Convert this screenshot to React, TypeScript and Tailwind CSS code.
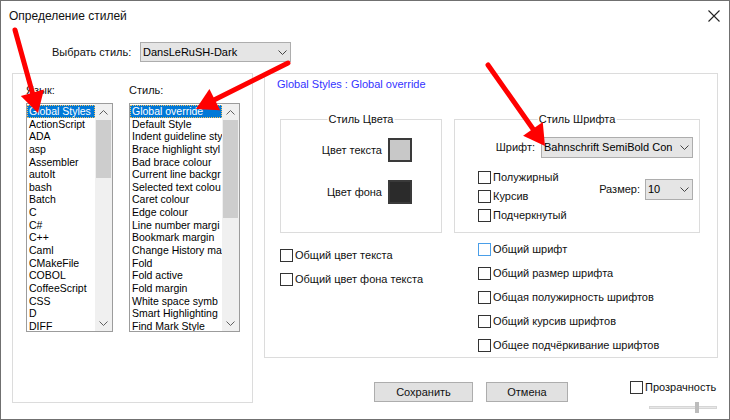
import React from 'react';

const languages = [
  'Global Styles', 'ActionScript', 'ADA', 'asp', 'Assembler', 'autoIt', 'bash', 'Batch', 'C',
  'C#', 'C++', 'Caml', 'CMakeFile', 'COBOL', 'CoffeeScript', 'CSS', 'D', 'DIFF',
];

// the list is narrow, so the long names show cut off, as in the dialog
const styles = [
  'Global override', 'Default Style', 'Indent guideline sty', 'Brace highlight styl',
  'Bad brace colour', 'Current line backgr', 'Selected text colou', 'Caret colour',
  'Edge colour', 'Line number margi', 'Bookmark margin', 'Change History ma', 'Fold',
  'Fold active', 'Fold margin', 'White space symb', 'Smart Highlighting', 'Find Mark Style',
];

function Chevron({ up = false, className = '' }: { up?: boolean; className?: string }) {
  return (
    <svg width="9" height="5" viewBox="0 0 9 5" className={className}>
      <path d={up ? 'M0.5 4.5 L4.5 0.5 L8.5 4.5' : 'M0.5 0.5 L4.5 4.5 L8.5 0.5'} fill="none" stroke="currentColor" strokeWidth="1" />
    </svg>
  );
}

function ListBox({ items, className, thumbClass }: { items: string[]; className: string; thumbClass: string }) {
  return (
    <div className={`flex h-[229px] border border-[#9c9c9c] bg-white ${className}`}>
      <div className="flex-1 overflow-hidden pt-[1px]">
        {items.map((item, i) => (
          <div
            key={item}
            className={`h-[12.65px] whitespace-nowrap pl-[2px] text-[10.5px] leading-[12.65px] ${
              i === 0 ? 'bg-[#0078d7] text-white outline-1 outline-dotted outline-offset-[-1px] outline-[#f0c060]' : 'text-black'
            }`}
          >
            {item}
          </div>
        ))}
      </div>
      {/* scrollbar */}
      <div className="flex w-[17px] flex-col bg-[#f0f0f0] text-[#606060]">
        <div className="flex h-[16px] items-center justify-center">
          <Chevron up />
        </div>
        <div className="flex-1 px-[1px]">
          <div className={`bg-[#cdcdcd] ${thumbClass}`} />
        </div>
        <div className="flex h-[16px] items-center justify-center">
          <Chevron />
        </div>
      </div>
    </div>
  );
}

function Combo({ value, className }: { value: string; className: string }) {
  return (
    <div className={`flex items-center border border-[#adadad] bg-[#e5e5e5] text-[11px] text-black ${className}`}>
      <span className="flex-1 overflow-hidden whitespace-nowrap pl-[2px]">{value}</span>
      <span className="flex w-[16px] shrink-0 justify-center text-[#444]">
        <Chevron />
      </span>
    </div>
  );
}

function Check({ label, focused = false }: { label: string; focused?: boolean }) {
  return (
    <div className="flex h-[13px] items-center gap-[2px] text-[11px] text-[#111]">
      <span className={`h-[13px] w-[13px] shrink-0 border bg-white ${focused ? 'border-[#4a9ee8]' : 'border-[#333]'}`} />
      <span className="whitespace-nowrap">{label}</span>
    </div>
  );
}

function Group({ title, className, children }: { title: string; className: string; children: React.ReactNode }) {
  return (
    <div className={`relative border border-[#dcdcdc] ${className}`}>
      <span className="absolute left-1/2 top-[-8px] -translate-x-1/2 bg-white px-[1px] text-[11px] leading-[14px] whitespace-nowrap text-[#111]">
        {title}
      </span>
      {children}
    </div>
  );
}

function Arrow({ sx, sy, tx, ty }: { sx: number; sy: number; tx: number; ty: number }) {
  const dx = tx - sx;
  const dy = ty - sy;
  const len = Math.hypot(dx, dy);
  const ux = dx / len;
  const uy = dy / len;
  const L = 21;
  const W = 12;
  const bx = tx - L * ux;
  const by = ty - L * uy;
  const px = -uy;
  const py = ux;
  const pts = `${tx},${ty} ${bx + W * px},${by + W * py} ${bx - W * px},${by - W * py}`;
  return (
    <g>
      <line x1={sx} y1={sy} x2={bx + ux * 2} y2={by + uy * 2} stroke="#ff0000" strokeWidth="5" strokeLinecap="round" />
      <polygon points={pts} fill="#ff0000" />
    </g>
  );
}

export default function App() {
  return (
    <div className="relative flex h-[420px] w-[730px] flex-col overflow-hidden border border-[#707070] bg-white font-['Liberation_Sans',Arial,sans-serif] text-black">
      {/* Title bar */}
      <div className="flex h-[29px] items-center justify-between pl-[8px] pr-[9px]">
        <span className="text-[12px] text-[#111]">Определение стилей</span>
        <svg width="12" height="12" viewBox="0 0 12 12">
          <path d="M0.5 0.5 L11.5 11.5 M11.5 0.5 L0.5 11.5" stroke="#222" strokeWidth="1.1" />
        </svg>
      </div>

      {/* Style selector */}
      <div className="mt-[12px] flex items-center pl-[51px]">
        <span className="w-[88px] text-[11px] text-[#111]">Выбрать стиль:</span>
        <Combo value="DansLeRuSH-Dark" className="h-[20px] w-[151px]" />
      </div>

      <div className="mt-[11px] flex pl-[11px]">
        {/* Language / style lists */}
        <div className="h-[330px] w-[241px] border border-[#dcdcdc] pl-[13px] pt-[10px]">
          <div className="flex gap-[16px]">
            <div className="flex flex-col">
              <span className="mb-[6px] h-[13px] text-[11px] leading-[13px] text-[#111]">Язык:</span>
              <ListBox items={languages} className="w-[87px]" thumbClass="h-[58px]" />
            </div>
            <div className="flex flex-col">
              <span className="mb-[6px] h-[13px] text-[11px] leading-[13px] text-[#111]">Стиль:</span>
              <ListBox items={styles} className="w-[111px]" thumbClass="h-[98px]" />
            </div>
          </div>
        </div>

        {/* Right side */}
        <div className="ml-[11px] flex w-[454px] flex-col">
          <div className="h-[285px] border border-[#dcdcdc] pl-[12px] pt-[4px]">
            <div className="h-[13px] text-[11px] leading-[13px] text-[#3333ff]">Global Styles : Global override</div>

            <div className="mt-[28px] flex gap-[12px] pl-[3px]">
              <Group title="Стиль Цвета" className="h-[114px] w-[162px]">
                <div className="flex flex-col items-end gap-[18px] pr-[29px] pt-[18px]">
                  <div className="flex items-center gap-[6px] text-[11px] text-[#111]">
                    <span>Цвет текста</span>
                    <span className="h-[24px] w-[24px] border-2 border-[#3a3a3a] bg-[#c8c8c8]" />
                  </div>
                  <div className="flex items-center gap-[6px] text-[11px] text-[#111]">
                    <span>Цвет фона</span>
                    <span className="h-[24px] w-[24px] border-2 border-[#3a3a3a] bg-[#2b2b2b]" />
                  </div>
                </div>
              </Group>

              <Group title="Стиль Шрифта" className="h-[114px] w-[246px]">
                <div className="flex items-center justify-end gap-[6px] pr-[6px] pt-[17px] text-[11px] text-[#111]">
                  <span>Шрифт:</span>
                  <Combo value="Bahnschrift SemiBold Con" className="h-[21px] w-[152px]" />
                </div>
                <div className="mt-[13px] flex justify-between pl-[23px] pr-[6px]">
                  <div className="flex flex-col gap-[6px]">
                    <Check label="Полужирный" />
                    <Check label="Курсив" />
                    <Check label="Подчеркнутый" />
                  </div>
                  <div className="mt-[8px] flex h-[21px] items-center gap-[5px] text-[11px] text-[#111]">
                    <span>Размер:</span>
                    <Combo value="10" className="h-[21px] w-[48px]" />
                  </div>
                </div>
              </Group>
            </div>

            <div className="flex pl-[3px]">
              <div className="mt-[16px] flex w-[198px] flex-col gap-[11px]">
                <Check label="Общий цвет текста" />
                <Check label="Общий цвет фона текста" />
              </div>
              <div className="mt-[10px] flex flex-col gap-[11px]">
                <Check label="Общий шрифт" focused />
                <Check label="Общий размер шрифта" />
                <Check label="Общая полужирность шрифтов" />
                <Check label="Общий курсив шрифтов" />
                <Check label="Общее подчёркивание шрифтов" />
              </div>
            </div>
          </div>

          {/* Buttons */}
          <div className="mt-[23px] flex items-start pl-[110px]">
            <button className="mt-[1px] h-[20px] w-[99px] border border-[#adadad] bg-[#e1e1e1] text-[11px] text-[#111]">
              Сохранить
            </button>
            <button className="ml-[13px] mt-[1px] h-[20px] w-[82px] border border-[#adadad] bg-[#e1e1e1] text-[11px] text-[#111]">
              Отмена
            </button>
            <div className="ml-[62px] flex flex-col">
              <Check label="Прозрачность" />
              <div className="relative ml-[19px] mt-[12px] h-[3px] w-[68px] border border-[#d6d6d6] bg-[#e7e7e7]">
                <span className="absolute left-[45px] top-[-5px] h-[11px] w-[4px] bg-[#bcbcbc]" />
              </div>
            </div>
          </div>
        </div>
      </div>

      {/* red annotation arrows */}
      <svg className="pointer-events-none absolute left-[-1px] top-[-1px]" width="730" height="420">
        <Arrow sx={15} sy={30} tx={38} ty={113} />
        <Arrow sx={288} sy={63} tx={196} ty={109} />
        <Arrow sx={488} sy={65} tx={545} ty={146} />
      </svg>
    </div>
  );
}
